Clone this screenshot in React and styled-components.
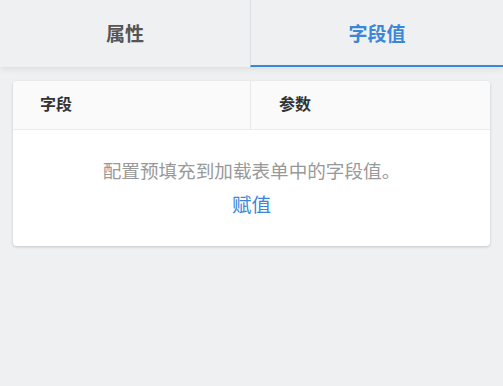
import React from "react";
import styled, { createGlobalStyle } from "styled-components";

const Global = createGlobalStyle`
  html, body { margin: 0; padding: 0; background: #eff0f2; }
  body { font-family: "Noto Sans CJK SC", "Noto Sans", sans-serif; }
`;

const Page = styled.div`
  width: 503px;
  height: 386px;
  background: #eff0f2;
  display: flex;
  flex-direction: column;
`;

const TabBar = styled.div`
  display: grid;
  grid-template-columns: 250px 1fr;
  height: 67px;
  background: #eff0f2;
  box-shadow: 0 2px 6px rgba(0, 0, 0, 0.08);
  position: relative;
  z-index: 1;
`;

const Tab = styled.div`
  display: flex;
  align-items: center;
  justify-content: center;
  font-size: 19px;
  font-weight: 700;
  color: ${(p) => (p.$active ? "#3a86d8" : "#555")};
  border-left: ${(p) => (p.$active ? "1px solid #dcdde0" : "none")};
  border-bottom: 2px solid ${(p) => (p.$active ? "#3a86d8" : "transparent")};
  padding-bottom: 1px;
  box-sizing: border-box;
`;

const Body = styled.div`
  padding: 14px 13px 0 13px;
`;

const Card = styled.div`
  background: #fff;
  border-radius: 4px;
  box-shadow: 0 1px 3px rgba(0, 0, 0, 0.18);
  overflow: hidden;
`;

const HeadRow = styled.div`
  display: grid;
  grid-template-columns: 237px 1fr;
  height: 48px;
  background: #fafafa;
  border-bottom: 1px solid #ececec;
`;

const HeadCell = styled.div`
  display: flex;
  align-items: center;
  padding-left: ${(p) => (p.$first ? "27px" : "28px")};
  padding-bottom: 4px;
  font-size: 16px;
  font-weight: 700;
  color: #333;
  border-left: ${(p) => (p.$first ? "none" : "1px solid #e8e8e8")};
`;

const Empty = styled.div`
  display: flex;
  flex-direction: column;
  align-items: center;
  padding: 28px 0 30px;
  gap: 10px;
`;

const Hint = styled.div`
  font-size: 18.6px;
  color: #999;
  line-height: 24px;
`;

const Link = styled.a`
  font-size: 19.5px;
  color: #3a86d8;
  line-height: 24px;
  text-decoration: none;
  cursor: pointer;
`;

export default function App() {
  return (
    <Page>
      <Global />
      <TabBar>
        <Tab>属性</Tab>
        <Tab $active>字段值</Tab>
      </TabBar>
      <Body>
        <Card>
          <HeadRow>
            <HeadCell $first>字段</HeadCell>
            <HeadCell>参数</HeadCell>
          </HeadRow>
          <Empty>
            <Hint>配置预填充到加载表单中的字段值。</Hint>
            <Link>赋值</Link>
          </Empty>
        </Card>
      </Body>
    </Page>
  );
}
